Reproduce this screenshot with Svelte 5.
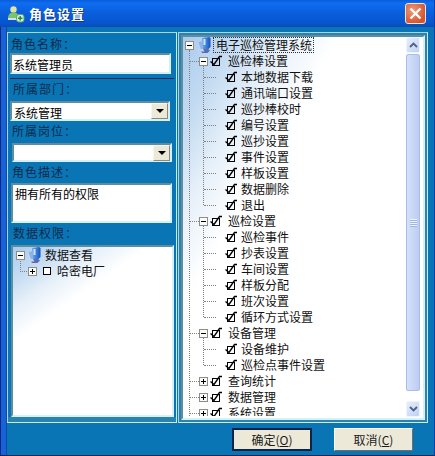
<script>
  const rows = [
    { t: '电子巡检管理系统', l: 0, e: '-', root: true },
    { t: '巡检棒设置', l: 1, e: '-' },
    { t: '本地数据下载', l: 2 }, { t: '通讯端口设置', l: 2 }, { t: '巡抄棒校时', l: 2 }, { t: '编号设置', l: 2 },
    { t: '巡抄设置', l: 2 }, { t: '事件设置', l: 2 }, { t: '样板设置', l: 2 }, { t: '数据删除', l: 2 }, { t: '退出', l: 2 },
    { t: '巡检设置', l: 1, e: '-' },
    { t: '巡检事件', l: 2 }, { t: '抄表设置', l: 2 }, { t: '车间设置', l: 2 }, { t: '样板分配', l: 2 }, { t: '班次设置', l: 2 }, { t: '循环方式设置', l: 2 },
    { t: '设备管理', l: 1, e: '-' },
    { t: '设备维护', l: 2 }, { t: '巡检点事件设置', l: 2 },
    { t: '查询统计', l: 1, e: '+' }, { t: '数据管理', l: 1, e: '+' }, { t: '系统设置', l: 1, e: '+' }
  ];
</script>

{#snippet expander(sign)}
  <svg class="exp" width="9" height="9" viewBox="0 0 9 9">
    <rect x=".5" y=".5" width="8" height="8" fill="#fbfbf6" stroke="#8c8c8c"/>
    <path d={sign === '-' ? 'M2 4.500h5' : 'M2 4.500h5M4.500 2v5'} stroke="#000"/>
  </svg>
{/snippet}

{#snippet check()}
  <svg class="chk" width="13" height="12" viewBox="0 0 13 12">
    <rect x="2.500" y="3.500" width="7" height="7" fill="none" stroke="#000"/>
    <path d="M.5 6.500l3.500 3L9.500 1.500h2.500" fill="none" stroke="#000" stroke-width="1.400"/>
  </svg>
{/snippet}

{#snippet computer(id)}
  <svg class="pc" width="13" height="16" viewBox="0 0 13 16">
    <defs>
      <linearGradient id={id} x1="0" x2="1" y1="0" y2="0">
        <stop offset="0" stop-color="#6fa9ee"/><stop offset=".6" stop-color="#2f78de"/><stop offset="1" stop-color="#1c4fae"/>
      </linearGradient>
    </defs>
    <path d="M4 1l7-1 1.500 1v9L10 12.500H5z" fill={`url(#${id})`}/>
    <path d="M5.500 2h2v6h-2z" fill="#cfe3fa"/>
    <path d="M.5 5L5 4v8.500H3z" fill="#8db2e6"/>
    <path d="M2 12h8l2 1.500L9.500 16H4z" fill="#5f6bb0"/>
    <path d="M1 12h4l1.500 2.500H3z" fill="#c9d3ec"/>
  </svg>
{/snippet}

<div class="window">
  <header class="titlebar">
    <svg class="appicon" width="18" height="18" viewBox="0 0 18 18">
      <circle cx="6.500" cy="4.500" r="3.200" fill="#dfe3a8"/>
      <path d="M1 14c0-5 2-6.500 5.500-6.500S12 9 12 14z" fill="#7cc46c"/>
      <rect x="1" y="13" width="9" height="2" fill="#cfe3f2"/>
      <rect x="9.500" y="9.500" width="7.500" height="7.500" rx="2.500" fill="#d9ecdc" stroke="#5aa56a"/>
      <path d="M13.200 11v4.500M11 13.200h4.500" stroke="#1f8f3f" stroke-width="1.500"/>
    </svg>
    <span class="title">角色设置</span>
    <button class="close" aria-label="关闭">
      <svg width="13" height="13" viewBox="0 0 13 13"><path d="M1.500 1.500l10 10M11.500 1.500l-10 10" stroke="#fff" stroke-width="2.400"/></svg>
    </button>
  </header>

  <main class="content">
    <div class="panes">
      <section class="left">
        <div class="label l-a">角色名称：</div>
        <div class="field name">系统管理员</div>
        <div class="rule"></div>
        <div class="label l-b">所属部门：</div>
        <div class="field combo">系统管理<span class="arrow"><i></i></span></div>
        <div class="label l-c">所属岗位：</div>
        <div class="field combo post"><span class="arrow"><i></i></span></div>
        <div class="label l-d">角色描述：</div>
        <div class="field desc">拥有所有的权限</div>
        <div class="label l-e">数据权限：</div>
        <div class="tree small">
          <div class="srow">{@render expander('-')}{@render computer('pc-a')}<span>数据查看</span></div>
          <div class="srow sub">
            <span class="hook"></span>
            {@render expander('+')}<i class="box"></i><span>哈密电厂</span>
          </div>
        </div>
      </section>

      <section class="right">
        <div class="tree big">
          <div class="list">
            <span class="vline root-v"></span>
            <span class="vline l1a"></span>
            <span class="vline l1b"></span>
            <span class="vline l1c"></span>
            {#each rows as r}
              <div class="row lvl{r.l}">
                {#if r.l > 0}<span class="dash"></span>{/if}
                {#if r.e}{@render expander(r.e)}{/if}
                {#if r.root}{@render computer('pc-b')}{:else}{@render check()}{/if}
                <span class:focus={r.root}>{r.t}</span>
              </div>
            {/each}
          </div>
          <div class="scroll">
            <div class="sbtn"><svg width="9" height="6" viewBox="0 0 9 6"><path d="M1 5l3.500-3.500L8 5" fill="none" stroke="#4d6185" stroke-width="1.800"/></svg></div>
            <div class="thumb"><b></b></div>
            <div class="track"></div>
            <div class="sbtn"><svg width="9" height="6" viewBox="0 0 9 6"><path d="M1 1l3.500 3.500L8 1" fill="none" stroke="#4d6185" stroke-width="1.800"/></svg></div>
          </div>
        </div>
      </section>
    </div>

    <footer class="actions">
      <button class="btn default">确定(<u>O</u>)</button>
      <button class="btn">取消(<u>C</u>)</button>
    </footer>
  </main>
</div>

<style>
  :global(body) { margin: 0; background: #0a246a; }
  .window {
    width: 435px; height: 456px; box-sizing: border-box; overflow: hidden;
    display: flex; flex-direction: column;
    font: 12px/16px "Noto Sans CJK SC", sans-serif; color: #111;
    background: #0a75b5;
    border-right: 1px solid #0a3fae;
    border-bottom: 1px solid #10204f;
  }
  .titlebar {
    height: 27px; flex: none; display: flex; align-items: center;
    padding: 0 8px 0 7px; box-sizing: border-box;
    background: linear-gradient(#0a5bdc 0, #0e6df0 12%, #0a60dd 45%, #0755cf 85%, #0a4bb4 100%);
  }
  .appicon { margin-right: 4px; }
  .title { color: #fff; font-size: 13px; font-weight: 700; letter-spacing: 1px; flex: 1; text-shadow: 1px 1px 0 #0a3c8c; }
  .close {
    width: 21px; height: 21px; margin-top: 0; padding: 0; border: 1px solid #f0e8e0; border-radius: 3px;
    background: radial-gradient(circle at 35% 35%, #ef9a78, #d5542c 75%);
    display: flex; align-items: center; justify-content: center;
  }
  .content {
    flex: 1; display: flex; flex-direction: column; min-height: 0;
    padding: 5px 6px 0 7px;
    background: #0a75b5;
    box-shadow: inset 1px 0 0 #0d2a7a, inset 6px 0 0 #1762d8, inset 7px 0 0 #0a4aa8;
  }
  .panes { display: flex; gap: 1px; height: 391px; flex: none; }
  .left, .right {
    box-sizing: border-box;
    border: 1px solid #a9d4e0;
    border-right-color: #cfeaef; border-bottom-color: #cfeaef;
  }
  .left {
    width: 170px; display: flex; flex-direction: column;
    padding: 0 2px 0 2px; background: #0a75b5;
    box-shadow: inset 0 -5px 0 #2a82b0;
  }
  .label { color: #0c2a4a; letter-spacing: 1px; height: 16px; flex: none; }
  .l-a { margin: 3px 0 1px 1px; }
  .l-b { margin: 1px 0 4px 3px; }
  .l-c { margin: 2px 0 4px 2px; }
  .l-d { margin: 2px 0 3px 2px; }
  .l-e { margin: 2px 0 4px 3px; }
  .field {
    background: #fff; box-sizing: border-box; flex: none;
    border: 2px solid #5f8c9e; border-right-color: #d3f2f5; border-bottom-color: #d3f2f5;
    padding: 0 1px; line-height: 17px; display: flex; color: #000;
  }
  .name { height: 21px; width: 161px; padding-top: 1px; }
  .rule { height: 1px; background: #0c2f63; margin: 4px 0 1px; width: 164px; flex: none; }
  .combo { height: 20px; width: 160px; padding: 1px 0 0 2px; }
  .post { margin-left: 2px; height: 19px; }
  .arrow {
    width: 17px; height: 16px; margin: -1px 0 0 auto; background: #ece9d8; box-sizing: border-box;
    border: 1px solid; border-color: #f8f6ec #8c8a7c #8c8a7c #f8f6ec;
    display: flex; align-items: center; justify-content: center;
  }
  .arrow i { width: 0; height: 0; border: 4px solid transparent; border-top: 4px solid #000; border-bottom: 0; }
  .desc { height: 40px; width: 161px; margin-left: 1px; padding: 0 2px; }
  .tree {
    box-sizing: border-box; position: relative;
    border: 2px solid #5f8c9e; border-right-color: #d3f2f5; border-bottom-color: #d3f2f5;
  }
  .small {
    margin-left: 1px; width: 163px; flex: none; height: 172px; padding: 0 0 0 3px;
    background: linear-gradient(145deg, #a9cbec 0, #c5dcf2 12%, #e6f0f9 22%, #fff 34%);
  }
  .srow { display: flex; align-items: center; height: 16px; position: relative; }
  .srow .pc { margin: 0 4px 0 3px; }
  .srow.sub { padding-left: 12px; }
  .srow.sub .box { width: 6px; height: 6px; border: 1.500px solid #000; margin: 0 6px 0 6px; background: #fff; }
  .hook { position: absolute; left: 4px; top: -4px; width: 8px; height: 12px; border-left: 1px dotted #808080; border-bottom: 1px dotted #808080; }

  .right { flex: 1; padding: 2px; display: flex; background: #2a82b0; }
  .big {
    flex: 1; display: flex; overflow: hidden;
    background: linear-gradient(120deg, #a9cbec 0, #c5dcf2 12%, #e6f0f9 22%, #fff 34%);
  }
  .list { flex: 1; padding: 0 0 0 2px; margin-bottom: 2px; position: relative; overflow: hidden; }
  .row { display: flex; align-items: center; height: 16px; position: relative; white-space: nowrap; flex: none; }
  .lvl1 { padding-left: 14px; }
  .lvl2 { padding-left: 29px; }
  .exp { flex: none; position: relative; }
  .pc { flex: none; margin: 0 2px 0 4px; }
  .chk { flex: none; margin: 0 5px 0 2px; }
  .lvl2 .chk { margin: 0 3px 0 11px; }
  .focus { outline: 1px dotted #333; outline-offset: -1px; padding: 0 2px 0 3px; }
  .dash { position: absolute; top: 8px; border-top: 1px dotted #808080; }
  .lvl1 .dash { left: 5px; width: 9px; }
  .lvl2 .dash { left: 19px; width: 12px; }
  .vline { position: absolute; border-left: 1px dotted #808080; }
  .root-v { left: 6px; top: 13px; height: 366px; }
  .l1a { left: 20px; top: 29px; height: 139px; }
  .l1b { left: 20px; top: 189px; height: 91px; }
  .l1c { left: 20px; top: 301px; height: 27px; }

  .scroll { width: 14px; flex: none; display: flex; flex-direction: column; margin: 0 3px 1px 0; }
  .sbtn {
    height: 16px; flex: none; border-radius: 2px; display: flex; align-items: center; justify-content: center;
    background: linear-gradient(135deg, #e6eefc, #bfd1f7); border: 1px solid #eef3fc; box-sizing: border-box;
  }
  .thumb {
    height: 337px; flex: none; margin-top: 1px; border-radius: 2px; border: 1px solid #a9bde6; box-sizing: border-box;
    background: linear-gradient(90deg, #d5e1fa, #bccdf4);
    display: flex; align-items: center; justify-content: center;
  }
  .thumb b { width: 7px; height: 8px; background: repeating-linear-gradient(#eef3fd 0 1px, #9fb5e2 1px 2px); }
  .track { flex: 1; }

  .actions { flex: 1; display: flex; justify-content: flex-end; align-items: flex-start; gap: 22px; padding: 5px 15px 0 0; }
  .btn {
    width: 79px; height: 23px; padding: 0; box-sizing: border-box;
    font: 12px/16px "Noto Sans CJK SC", sans-serif; color: #1a1a1a;
    background: #ece9d8; border: 1px solid; border-color: #fff #716f64 #716f64 #fff;
  }
  .btn.default { border: 2px solid #0c2546; width: 80px; }
</style>
